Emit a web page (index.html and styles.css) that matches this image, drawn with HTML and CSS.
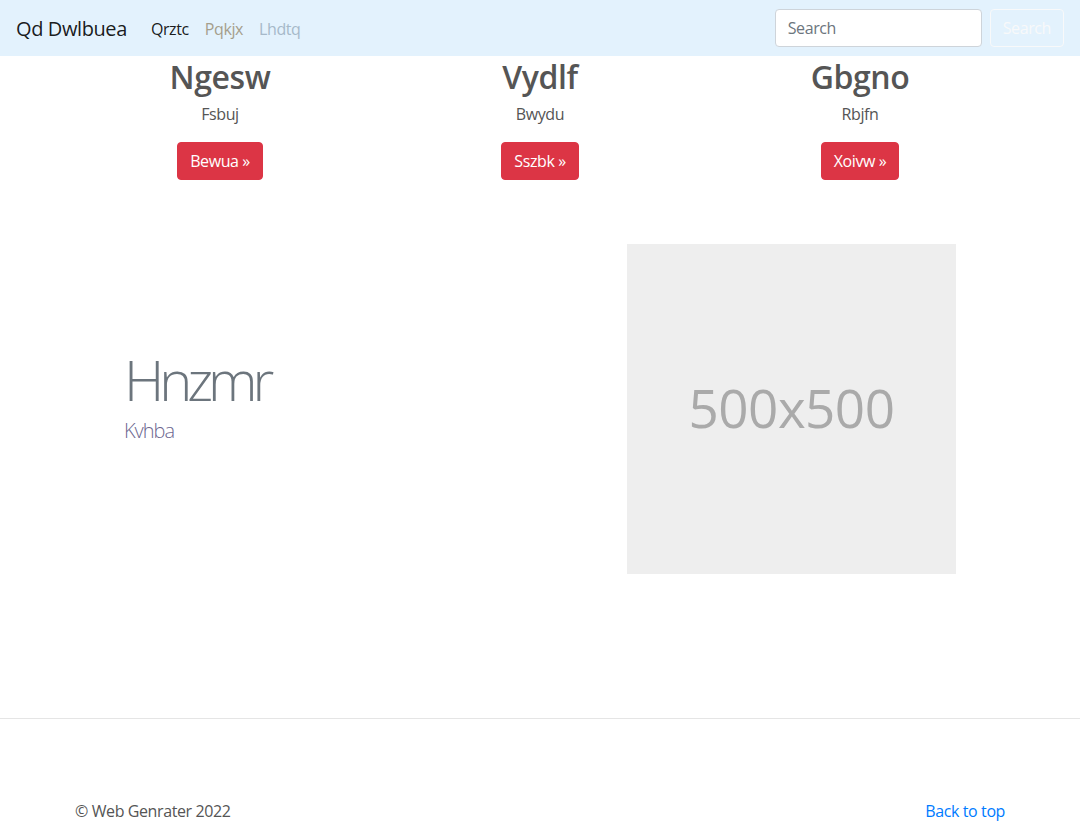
FILE: index.html
```html
<!DOCTYPE html>
<html lang="en">
<head>
<meta charset="utf-8">
<title>Qd Dwlbuea</title>
<link rel="stylesheet" href="styles.css">
</head>
<body>
<nav class="navbar">
  <a class="brand" href="#">Qd Dwlbuea</a>
  <ul class="nav">
    <li><a class="nav-link active" href="#">Qrztc</a></li>
    <li><a class="nav-link tan" href="#">Pqkjx</a></li>
    <li><a class="nav-link pale" href="#">Lhdtq</a></li>
  </ul>
  <form class="search">
    <input class="search-input" type="text" placeholder="Search">
    <button class="search-btn" type="button">Search</button>
  </form>
</nav>

<main>
  <div class="container marketing">
    <div class="col">
      <h2>Ngesw</h2>
      <p>Fsbuj</p>
      <p><a class="btn" href="#">Bewua &raquo;</a></p>
    </div>
    <div class="col">
      <h2>Vydlf</h2>
      <p>Bwydu</p>
      <p><a class="btn" href="#">Sszbk &raquo;</a></p>
    </div>
    <div class="col">
      <h2>Gbgno</h2>
      <p>Rbjfn</p>
      <p><a class="btn" href="#">Xoivw &raquo;</a></p>
    </div>
  </div>

  <div class="container featurette">
    <div class="feature-text">
      <div>
        <h1 class="display">Hnzmr</h1>
        <p class="lead">Kvhba</p>
      </div>
    </div>
    <div class="feature-media">
      <div class="placeholder"><span>500x500</span></div>
    </div>
  </div>
</main>

<hr class="divider">

<footer class="container footer">
  <p>&copy; Web Genrater 2022</p>
  <a href="#">Back to top</a>
</footer>
</body>
</html>
```

FILE: styles.css
```css
* { box-sizing: border-box; }
html, body { margin: 0; padding: 0; }
body {
  font-family: "Open Sans", "Noto Sans", "Liberation Sans", sans-serif;
  font-size: 16px;
  line-height: 1.5;
  letter-spacing: -0.025em;
  color: #555;
  background: #fff;
}
a { text-decoration: none; }

.navbar {
  height: 56px;
  background: #e3f2fd;
  display: flex;
  align-items: center;
  padding: 0 16px;
}
.brand {
  font-size: 20px;
  color: rgba(0,0,0,.9);
  margin-right: 16px;
  line-height: 30px;
  margin-top: 2px;
}
.nav {
  list-style: none;
  display: flex;
  margin: 0;
  padding: 0;
  flex: 1;
}
.nav-link {
  display: block;
  padding: 8px 8px;
  font-size: 16px;
  margin-top: 2px;
}
.nav-link.active { color: rgba(0,0,0,.9); }
.nav-link.tan { color: #a59e8c; }
.nav-link.pale { color: #a6b9c9; }

.search { display: flex; align-items: center; }
.search-input {
  width: 207px;
  height: 38px;
  padding: 6px 12px;
  font: inherit;
  font-size: 16px;
  letter-spacing: -0.025em;
  color: #495057;
  border: 1px solid #ced4da;
  border-radius: 4px;
  background: #fff;
  margin-right: 8px;
}
.search-input::placeholder { color: #6c757d; }
.search-btn {
  height: 38px;
  padding: 6px 12px;
  font: inherit;
  font-size: 16px;
  letter-spacing: -0.025em;
  color: #f8f9fa;
  background: transparent;
  border: 1px solid #f8f9fa;
  border-radius: 4px;
}

.container {
  width: 960px;
  margin: 0 auto;
}

.marketing {
  display: flex;
  text-align: center;
}
.marketing .col {
  flex: 1;
  padding: 0 15px;
}
.marketing h2 {
  font-size: 32px;
  font-weight: 600;
  line-height: 1.2;
  margin: 0 0 6px;
  padding-top: 2px;
  color: #555;
}
.marketing p { margin: 0 0 16px; }
.btn {
  display: inline-block;
  height: 38px;
  padding: 6px 12px;
  color: #fff;
  background: #dc3545;
  border: 1px solid #dc3545;
  border-radius: 4px;
  font-size: 16px;
  line-height: 24px;
}

.featurette {
  display: grid;
  grid-template-columns: 1fr 1fr;
  padding: 48px 0;
}
.feature-text {
  display: flex;
  align-items: center;
  padding-left: 64px;
  padding-bottom: 26px;
}
.feature-media {
  display: flex;
  justify-content: flex-end;
  padding-right: 64px;
}
.display {
  font-size: 56px;
  font-weight: 300;
  line-height: 64px;
  letter-spacing: -0.09em;
  color: #6c757d;
  margin: 0;
}
.lead {
  font-size: 20px;
  font-weight: 300;
  line-height: 30px;
  letter-spacing: -0.05em;
  color: #6c6790;
  margin: 5px 0 0;
}
.placeholder {
  width: 329px;
  height: 330px;
  background: #eee;
  display: flex;
  align-items: center;
  justify-content: center;
}
.placeholder span {
  font-size: 53px;
  color: #aaa;
  line-height: 1;
  letter-spacing: -0.01em;
  margin-top: -4px;
}

.divider {
  margin: 96px 0 0;
  border: 0;
  border-top: 1px solid #e5e5e5;
}

.footer {
  display: flex;
  justify-content: space-between;
  padding: 80px 15px 0;
}
.footer p { margin: 0 0 16px; }
.footer a { color: #007bff; }
```
